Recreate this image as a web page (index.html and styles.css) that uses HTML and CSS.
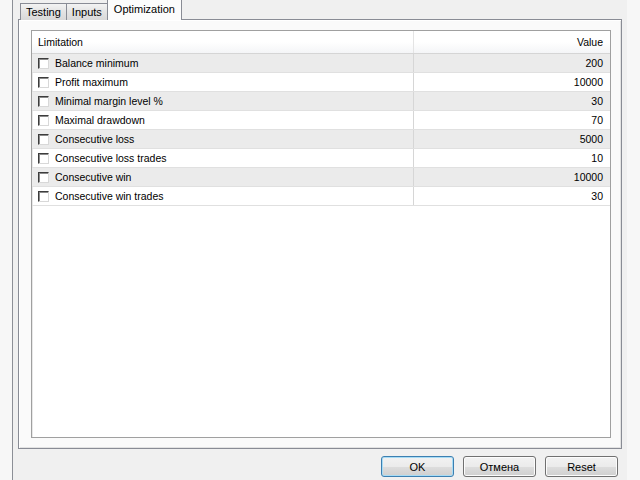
FILE: index.html
```html
<!DOCTYPE html>
<html lang="en">
<head>
  <meta charset="UTF-8">
  <title>Optimization</title>
  <link rel="stylesheet" href="styles.css">
</head>
<body>
  <div class="dialog">
    <div class="tabs">
      <div class="tab">Testing</div>
      <div class="tab">Inputs</div>
      <div class="tab active">Optimization</div>
    </div>
    <div class="panel">
      <div class="list">
        <div class="row head">
          <div class="cell name">Limitation</div>
          <div class="cell value">Value</div>
        </div>
        <div class="row odd">
          <div class="cell name"><span class="check"></span>Balance minimum</div>
          <div class="cell value">200</div>
        </div>
        <div class="row">
          <div class="cell name"><span class="check"></span>Profit maximum</div>
          <div class="cell value">10000</div>
        </div>
        <div class="row odd">
          <div class="cell name"><span class="check"></span>Minimal margin level %</div>
          <div class="cell value">30</div>
        </div>
        <div class="row">
          <div class="cell name"><span class="check"></span>Maximal drawdown</div>
          <div class="cell value">70</div>
        </div>
        <div class="row odd">
          <div class="cell name"><span class="check"></span>Consecutive loss</div>
          <div class="cell value">5000</div>
        </div>
        <div class="row">
          <div class="cell name"><span class="check"></span>Consecutive loss trades</div>
          <div class="cell value">10</div>
        </div>
        <div class="row odd">
          <div class="cell name"><span class="check"></span>Consecutive win</div>
          <div class="cell value">10000</div>
        </div>
        <div class="row">
          <div class="cell name"><span class="check"></span>Consecutive win trades</div>
          <div class="cell value">30</div>
        </div>
      </div>
    </div>
    <div class="buttons">
      <button class="btn default">OK</button>
      <button class="btn">Отмена</button>
      <button class="btn">Reset</button>
    </div>
  </div>
</body>
</html>
```

FILE: styles.css
```css
html, body {
  margin: 0;
  padding: 0;
}
body {
  width: 640px;
  height: 480px;
  background-color: #f7f7f7;
  font-family: "Liberation Sans", Arial, sans-serif;
  font-size: 10.5px;
  color: #000;
  overflow: hidden;
}
.dialog {
  margin-left: 12px;
  width: 614px;
  height: 480px;
  border-left: 1px solid #8c8f96;
  background-color: #f0f0f0;
}
.tabs {
  display: flex;
  align-items: flex-end;
  height: 20px;
  padding-left: 7px;
  font-size: 11px;
}
.tab {
  height: 16px;
  line-height: 17px;
  padding: 0 5px;
  border: 1px solid #898c95;
  border-bottom: none;
  background: linear-gradient(#f3f3f3, #e3e3e3 50%, #d9d9d9);
  margin-right: -1px;
  position: relative;
}
.tab.active {
  height: 20px;
  line-height: 18px;
  padding: 0 6px;
  background: #fcfcfc;
  z-index: 1;
}
.panel {
  margin: -1px 5px 0 5px;
  height: 408px;
  padding: 10px 10px 10px 12px;
  border: 1px solid #898c95;
  background-color: #fafafa;
  box-shadow: inset 1px 1px 0 #fff, inset -1px -1px 0 #e3e3e3;
}
.list {
  height: 406px;
  border: 1px solid #a0a0a0;
  background-color: #fff;
  box-shadow: inset 1px 1px 0 #e8e8e8;
}
.row {
  display: flex;
  height: 18px;
  border-bottom: 1px solid #e0e0e0;
}
.row.odd {
  background-color: #ebebeb;
}
.row.head {
  height: 22px;
  background: linear-gradient(#ffffff, #ffffff 50%, #f4f5f7);
  border-bottom: 1px solid #d5d5d5;
}
.cell {
  display: flex;
  align-items: center;
  box-sizing: border-box;
}
.cell.name {
  width: 382px;
  padding-left: 6px;
  border-right: 1px solid #d6d6d6;
}
.cell.value {
  flex: 1;
  justify-content: flex-end;
  padding-right: 7px;
}
.head .cell.name {
  border-right-color: #e4e4e4;
}
.check {
  display: inline-block;
  width: 9px;
  height: 9px;
  margin-right: 6px;
  border: 1px solid;
  border-color: #3c3c3c #d8d8d8 #d8d8d8 #3c3c3c;
  box-shadow: inset 1px 1px 0 #8a8a8a;
  background-color: #fff;
}
.buttons {
  display: flex;
  justify-content: flex-end;
  gap: 9px;
  padding: 7px 9px 0 0;
}
.btn {
  width: 73px;
  height: 21px;
  padding: 0;
  font-family: "Liberation Sans", Arial, sans-serif;
  font-size: 11px;
  color: #000;
  border: 1px solid #707070;
  border-radius: 3px;
  background: linear-gradient(#f2f2f2, #ebebeb 50%, #dddddd 51%, #cfcfcf);
  box-shadow: inset 0 0 0 1px #fcfcfc;
}
.btn.default {
  border-color: #3c7fb1;
  box-shadow: inset 0 0 0 1px #a8dcf5;
}
```
